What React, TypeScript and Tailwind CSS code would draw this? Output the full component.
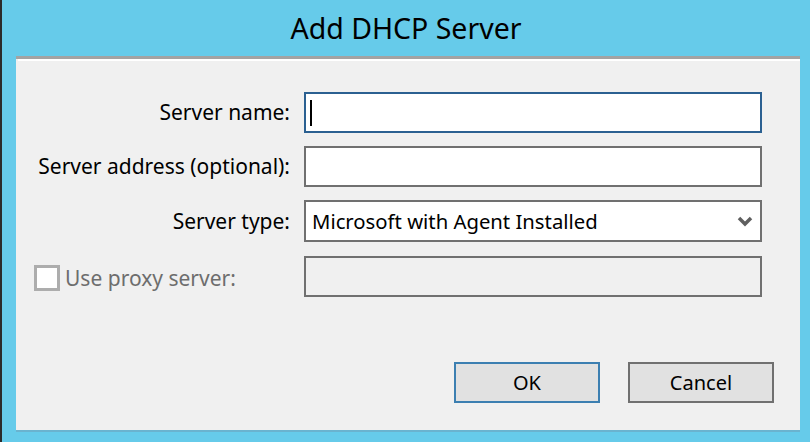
const font = { fontFamily: '"Noto Sans", "Open Sans", sans-serif' };

const Chevron = () => (
  <svg width="16" height="12" viewBox="0 0 16 12" className="shrink-0">
    <path d="M2 3 L8 9 L14 3" fill="none" stroke="#5f5f5f" strokeWidth="3.5" />
  </svg>
);

const Row = ({ label, children }: { label: string; children: React.ReactNode }) => (
  <div className="flex items-center gap-[14px]">
    <div className="w-[274px] text-right text-[21px] leading-none text-black">{label}</div>
    {children}
  </div>
);

export default function App() {
  return (
    <div
      className="w-[810px] h-[442px] bg-[#66cbea] border-l-2 border-[#2b2b2b] flex flex-col overflow-hidden"
      style={font}
    >
      <div className="h-[56px] flex items-center justify-center">
        <h1 className="text-[28.5px] text-black leading-none">Add DHCP Server</h1>
      </div>

      <div className="ml-[14px] w-[784px] h-[376px] bg-[#f0f0f0] border-t-[3px] border-[#a3a3a3] border-b-2 border-b-[#6ab3cf] flex flex-col">
        <div className="h-[2px] bg-white ml-[2px]" />

        <div className="flex flex-col gap-[13px] pt-[31px]">
          <Row label="Server name:">
            <div className="w-[458px] h-[41px] bg-white border-2 border-[#2b6091] flex items-center pl-[4px]">
              <div className="w-[2px] h-[26px] bg-black" />
            </div>
          </Row>
          <Row label="Server address (optional):">
            <div className="w-[458px] h-[41px] bg-white border-2 border-[#707070]" />
          </Row>
          <Row label="Server type:">
            <div className="w-[458px] h-[42px] bg-white border-2 border-[#707070] flex items-center justify-between pl-[6px] pr-[7px]">
              <span className="text-[20.3px] leading-none text-black">Microsoft with Agent Installed</span>
              <Chevron />
            </div>
          </Row>
          <div className="flex items-center gap-[14px] mt-[1px]">
            <div className="w-[274px] flex items-center gap-[5px] pl-[18px] pt-[3px]">
              <div className="w-[26px] h-[26px] bg-white border-[3px] border-[#adadad]" />
              <span className="text-[21px] leading-none text-[#6d6d6d]">Use proxy server:</span>
            </div>
            <div className="w-[458px] h-[41px] bg-[#f0f0f0] border-2 border-[#707070]" />
          </div>
        </div>

        <div className="flex justify-end gap-[28px] pr-[26px] mt-[65px]">
          <button className="w-[146px] h-[41px] bg-[#e1e1e1] border-2 border-[#3c7fb1] text-[20px] leading-none text-black">
            OK
          </button>
          <button className="w-[146px] h-[41px] bg-[#e1e1e1] border-2 border-[#707070] text-[20px] leading-none text-black">
            Cancel
          </button>
        </div>
      </div>
    </div>
  );
}
